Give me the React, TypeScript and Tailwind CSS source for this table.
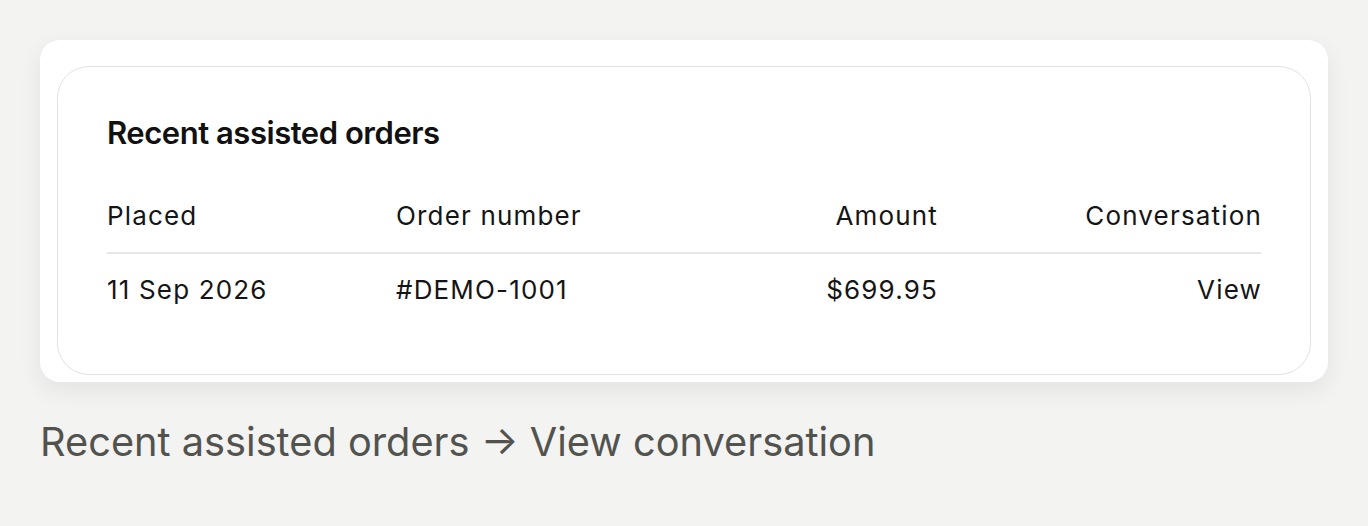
export default function App() {
  const rows = [
    { placed: "11 Sep 2026", order: "#DEMO-1001", amount: "$699.95", link: "View" },
  ];

  return (
    <div
      className="min-h-[526px] w-full bg-[#f3f3f1] px-10 pt-10"
      style={{ fontFamily: "Inter, 'Noto Sans', sans-serif" }}
    >
      <div className="rounded-[20px] bg-white px-[17px] pt-[26px] pb-[7px] shadow-[0_8px_24px_rgba(0,0,0,0.07)]">
        <div className="rounded-[32px] border border-[#e2e2e0] px-[49px] pt-[46px] pb-[66px]">
          <h2 className="text-[31px] font-semibold leading-[40px] tracking-[-0.015em] text-[#111]">
            Recent assisted orders
          </h2>

          <div className="mt-[45px] text-[26px] leading-[36px] tracking-[0.045em] text-[#151515]">
            <div className="grid grid-cols-[289px_271px_271px_324px] border-b-2 border-[#e6e6e4] pb-[18px]">
              <div>Placed</div>
              <div>Order number</div>
              <div className="text-right">Amount</div>
              <div className="text-right">Conversation</div>
            </div>
            {rows.map((row) => (
              <div
                key={row.order}
                className="grid grid-cols-[289px_271px_271px_324px] pt-[18px]"
              >
                <div>{row.placed}</div>
                <div>{row.order}</div>
                <div className="text-right">{row.amount}</div>
                <div className="text-right">{row.link}</div>
              </div>
            ))}
          </div>
        </div>
      </div>

      <p className="mt-[36px] text-[39.75px] leading-[48px] text-[#52524e]">
        Recent assisted orders → View conversation
      </p>
    </div>
  );
}
